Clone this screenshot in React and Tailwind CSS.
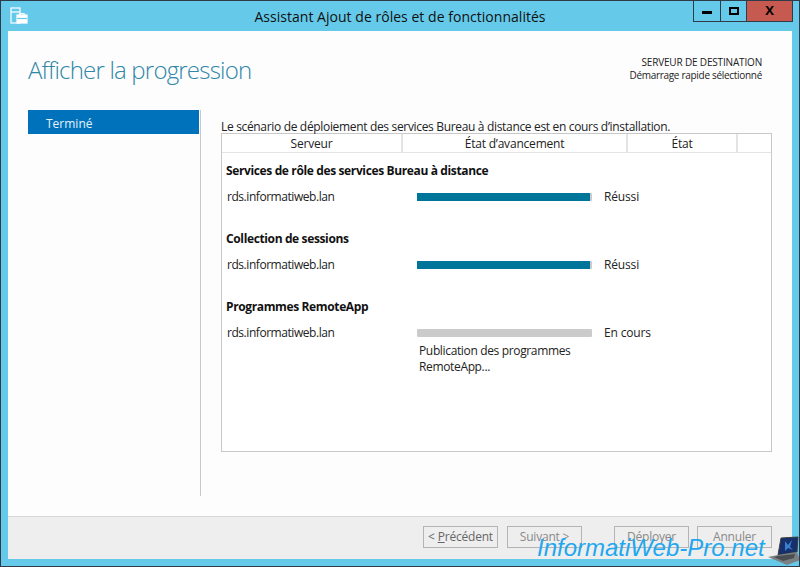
const font = { fontFamily: '"Open Sans", "Noto Sans", sans-serif' };

function Row({ title, status, bar, track, note }) {
  return (
    <div className="flex flex-col">
      <div className="h-[18px] pl-[4px] text-[12px] leading-[18px] font-bold tracking-[-0.37px] text-[#111]">{title}</div>
      <div className="mt-[8px] flex h-[18px] items-center">
        <div className="w-[195px] pl-[5px] text-[12px] leading-[18px] tracking-[-0.45px] text-[#222]">rds.informatiweb.lan</div>
        <div className="h-[8px] w-[175px] rounded-[1px] bg-[#cbcbcb]">
          {bar && <div className="h-[8px] w-[173px] bg-[#00759a]"></div>}
        </div>
        <div className="ml-[12px] text-[12px] leading-[18px] tracking-[-0.15px] text-[#222]">{status}</div>
      </div>
      {note && <div className="mt-[1px] ml-[197px] w-[170px] text-[12px] leading-[16px] tracking-[-0.35px] text-[#222]">{note}</div>}
    </div>
  );
}

export default function App() {
  return (
    <div style={font} className="relative flex h-[567px] w-[800px] flex-col overflow-hidden border-t-[1px] border-r-[1px] border-b-[1px] border-l-[1px] border-[#2f3b48] bg-[#65c9ea]">
      <div className="relative flex h-[30px] shrink-0 items-center justify-center">
        <svg className="absolute left-[9px] top-[6px]" width="18" height="18" viewBox="0 0 18 18" fill="none" stroke="#fff" strokeWidth="1.2">
          <rect x="1" y="1" width="9" height="15" fill="#65c9ea" />
          <path d="M1 5h9" />
          <rect x="7" y="8" width="10" height="8" fill="#fff" stroke="#fff" />
          <path d="M10 8V6.5h4V8" />
          <path d="M7 11.5h10" stroke="#65c9ea" />
        </svg>
        <span className="text-[14px] tracking-[0.03px] text-[#111]">Assistant Ajout de rôles et de fonctionnalités</span>
        <div className="absolute right-[6px] top-[-1px] flex h-[22px] border-x border-b border-[#2f3b48]">
          <div className="flex w-[27px] items-center justify-center border-r border-[#2f3b48]"><div className="mt-[3px] h-[3px] w-[10px] bg-black"></div></div>
          <div className="flex w-[26px] items-center justify-center border-r border-[#2f3b48]"><div className="h-[8px] w-[10px] border-2 border-black"></div></div>
          <div className="flex w-[45px] items-center justify-center bg-[#c75a50] text-[13px] font-bold leading-none text-black">X</div>
        </div>
      </div>

      <div className="mx-[7px] flex h-[528px] shrink-0 flex-col bg-[#fdfdfd]">
        <div className="flex h-[79px] shrink-0 items-start justify-between pl-[20px] pr-[30px]">
          <div className="mt-[21px] text-[24px] font-light leading-[36px] tracking-[-0.8px] text-[#2f86a8]">Afficher la progression</div>
          <div className="mt-[25px] text-right text-[10px] leading-[13px] text-[#222]">
            <div className="tracking-[-0.17px]">SERVEUR DE DESTINATION</div>
            <div className="tracking-[-0.3px]">Démarrage rapide sélectionné</div>
          </div>
        </div>
        <div className="flex flex-1">
          <div className="h-[386px] w-[193px] shrink-0 border-r border-[#c8c8c8] pl-[20px]">
            <div className="h-[24px] w-[171px] bg-[#0072bc] pl-[18px] pt-[2px] text-[12px] leading-[24px] text-[#e6f2fa]">Terminé</div>
          </div>
          <div className="ml-[0px] w-[551px] flex-1 pl-[20px]">
            <div className="h-[23px] pt-[9px] text-[12px] leading-[16px] tracking-[-0.33px] text-[#222]">Le scénario de déploiement des services Bureau à distance est en cours d’installation.</div>
            <div className="h-[319px] w-[551px] border border-[#c8c8c8] bg-white">
              <div className="flex h-[19px] border-b border-[#e4e4e4] text-center text-[12px] leading-[19px] tracking-[-0.2px] text-[#222]">
                <div className="w-[181px] border-r-2 border-[#e4e4e4]">Serveur</div>
                <div className="w-[225px] border-r-2 border-[#e4e4e4]">État d’avancement</div>
                <div className="w-[110px] border-r-2 border-[#e4e4e4]">État</div>
                <div className="flex-1"></div>
              </div>
              <div className="flex flex-col gap-[24px] pt-[9px]">
                <Row title="Services de rôle des services Bureau à distance" status="Réussi" bar />
                <Row title="Collection de sessions" status="Réussi" bar />
                <Row title="Programmes RemoteApp" status="En cours" note="Publication des programmes RemoteApp..." />
              </div>
            </div>
          </div>
        </div>
        <div className="mt-auto flex h-[43px] shrink-0 items-start justify-end gap-[10px] border-t border-[#d8d8d8] bg-[#eeeeee] pr-[20px] pt-[9px] text-[12px] tracking-[-0.2px] text-[#8a8a8a]">
          <div className="flex gap-[9px]">
            <div className="h-[22px] w-[75px] border border-[#b4b4b4] text-center leading-[20px] text-[#666]">&lt; <span className="underline">P</span>récédent</div>
            <div className="h-[22px] w-[75px] border border-[#b4b4b4] text-center leading-[20px]">Suivant &gt;</div>
          </div>
          <div className="ml-[22px] flex gap-[8px]">
            <div className="h-[22px] w-[75px] border border-[#b4b4b4] text-center leading-[20px]">Déployer</div>
            <div className="h-[22px] w-[75px] border border-[#b4b4b4] text-center leading-[20px]">Annuler</div>
          </div>
        </div>
      </div>

      <div className="absolute left-[536px] top-[531px] text-[24px] italic leading-[32px] text-[#1fa8f0] [font-family:'Liberation_Sans',sans-serif]">InformatiWeb-Pro.net</div>
      <svg className="absolute left-[767px] top-[535px]" width="32" height="30" viewBox="0 0 32 30">
        <path d="M13 2 30 1 29 16 10 19Z" fill="#16306e" stroke="#3c3c3c" />
        <path d="M17 5l3 4 4-5-2 7 3 3-5-2-3 3z" fill="#3a7fd0" />
        <path d="M10 19 29 16 32 24 19 29 0 21Z" fill="#7a7f83" />
        <path d="M10 20 27 18 26 22 15 25 6 21Z" fill="#4a4e52" />
      </svg>
    </div>
  );
}
